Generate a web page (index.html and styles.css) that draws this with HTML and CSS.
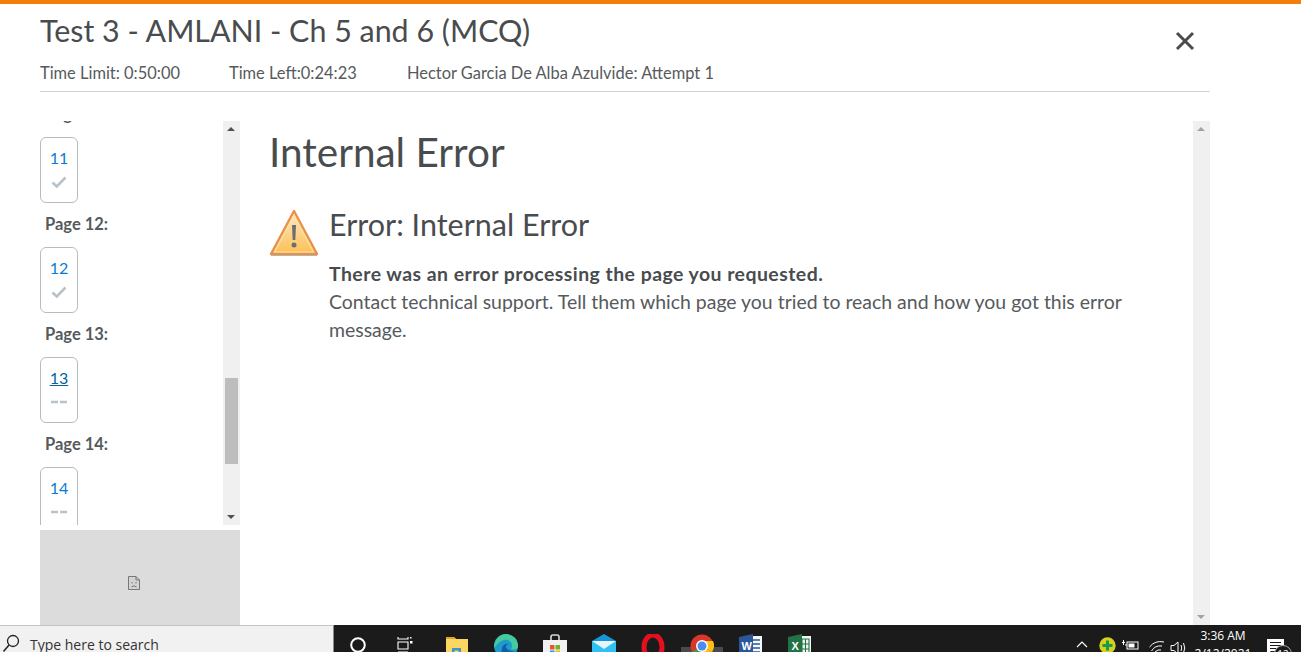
FILE: index.html
```html
<!DOCTYPE html>
<html lang="en">
<head>
    <meta charset="UTF-8">
    <meta name="viewport" content="width=device-width, initial-scale=1.0">
    <title>Test 3 - AMLANI - Ch 5 and 6 (MCQ)</title>
    <link rel="stylesheet" href="styles.css">
</head>
<body>
    <div class="page">
        <header class="quiz-header">
            <div class="title-row">
                <h1 class="quiz-title">Test 3 - AMLANI - Ch 5 and 6 (MCQ)</h1>
                <button class="close-btn" aria-label="Close">
                    <svg width="20" height="20" viewBox="0 0 20 20"><path d="M2 2 L18 18 M18 2 L2 18" stroke="#494c4e" stroke-width="3" fill="none"/></svg>
                </button>
            </div>
            <div class="meta-row">
                <span class="meta-limit">Time Limit: 0:50:00</span>
                <span class="meta-left">Time Left:0:24:23</span>
                <span>Hector Garcia De Alba Azulvide: Attempt 1</span>
            </div>
        </header>

        <main class="quiz-body">
            <aside class="sidebar">
                <div class="nav-wrap">
                    <div class="nav-list">
                        <div class="nav-page">
                            <div class="page-label">Page 11:</div>
                            <a class="page-card"><span class="page-num">11</span><svg class="state" width="16" height="12" viewBox="0 0 16 12"><path d="M1.5 6.5 L5.8 10.5 L14.5 1.5" stroke="#b9c2c8" stroke-width="2.6" fill="none"/></svg></a>
                        </div>
                        <div class="nav-page">
                            <div class="page-label">Page 12:</div>
                            <a class="page-card"><span class="page-num">12</span><svg class="state" width="16" height="12" viewBox="0 0 16 12"><path d="M1.5 6.5 L5.8 10.5 L14.5 1.5" stroke="#b9c2c8" stroke-width="2.6" fill="none"/></svg></a>
                        </div>
                        <div class="nav-page">
                            <div class="page-label">Page 13:</div>
                            <a class="page-card"><span class="page-num current">13</span><svg class="state" width="16" height="12" viewBox="0 0 16 12"><path d="M0 6 H7 M9 6 H16" stroke="#b9c2c8" stroke-width="2.4" fill="none"/></svg></a>
                        </div>
                        <div class="nav-page">
                            <div class="page-label">Page 14:</div>
                            <a class="page-card"><span class="page-num">14</span><svg class="state" width="16" height="12" viewBox="0 0 16 12"><path d="M0 6 H7 M9 6 H16" stroke="#b9c2c8" stroke-width="2.4" fill="none"/></svg></a>
                        </div>
                    </div>
                    <div class="scrollbar nav-scroll">
                        <span class="arrow-up dark"></span>
                        <span class="thumb"></span>
                        <span class="arrow-down dark"></span>
                    </div>
                </div>
                <div class="sidebar-foot">
                    <svg width="14" height="16" viewBox="0 0 14 16"><path d="M1.5 1.5 H9 L12.5 5 V14.5 H1.5 Z M9 1.5 V5 H12.5" fill="#d4d4d4" stroke="#777" stroke-width="1"/><path d="M4.5 12 Q7 9.5 9.5 12" stroke="#777" fill="none"/><path d="M5 7 V8.5 M9 7 V8.5" stroke="#777"/></svg>
                </div>
            </aside>

            <section class="content">
                <h2 class="error-title">Internal Error</h2>
                <div class="error-box">
                    <svg class="warn-icon" width="50" height="48" viewBox="0 0 50 48">
                        <defs>
                            <linearGradient id="warnFill" x1="0" y1="0" x2="0" y2="1">
                                <stop offset="0" stop-color="#ffe9c4"/>
                                <stop offset="1" stop-color="#fcc054"/>
                            </linearGradient>
                        </defs>
                        <path d="M25 2 L48 45 H2 Z" fill="url(#warnFill)" stroke="#e9904a" stroke-width="2.4" stroke-linejoin="round"/>
                        <path d="M25 6 L44.5 43 H5.5 Z" fill="none" stroke="#ffe2a6" stroke-width="1.2"/>
                        <path d="M2 46.5 H48" stroke="#7d9aa8" stroke-width="1" opacity=".6"/>
                        <path d="M23 16 H27 L26.3 31 H23.7 Z" fill="#6b6f72"/>
                        <circle cx="25" cy="36" r="2.5" fill="#6b6f72"/>
                    </svg>
                    <div class="error-text">
                        <h3 class="error-heading">Error: Internal Error</h3>
                        <p class="error-msg"><strong>There was an error processing the page you requested.</strong><br>Contact technical support. Tell them which page you tried to reach and how you got this error message.</p>
                    </div>
                </div>
            </section>

            <div class="scrollbar content-scroll">
                <span class="arrow-up"></span>
                <span class="arrow-down"></span>
            </div>
        </main>
    </div>

    <footer class="taskbar">
        <div class="search-box">
            <svg width="20" height="20" viewBox="0 0 20 20"><circle cx="12" cy="8" r="5.5" stroke="#222" stroke-width="1.3" fill="none"/><path d="M8 12 L2.5 18.5" stroke="#222" stroke-width="1.5"/></svg>
            <span>Type here to search</span>
        </div>
        <div class="task-icons">
            <span class="ti ti-cortana"><svg width="16" height="16" viewBox="0 0 16 16"><circle cx="8" cy="8" r="6.8" stroke="#fff" stroke-width="2" fill="none"/></svg></span>
            <span class="ti ti-view"><svg width="16" height="16" viewBox="0 0 16 16"><path d="M1 0 V2 H11 V0 M1 15 H11 M1 5 H11 V12 H1 Z" stroke="#fff" stroke-width="1.1" fill="none"/><rect x="13" y="4" width="2.5" height="2.5" fill="#fff"/><rect x="13" y="0" width="1.5" height="1.5" fill="#fff"/></svg></span>
            <span class="ti ti-files"><svg width="22" height="22" viewBox="0 0 22 22"><path d="M0 1 H8 L10 3 H22 V22 H0 Z" fill="#fbd661"/><path d="M0 1 H8 L10 3 H0 Z" fill="#e0a52e"/><rect x="6" y="12" width="9" height="10" fill="#3a96d0"/><rect x="8.5" y="14.5" width="4" height="4" fill="#fbd661"/></svg></span>
            <span class="ti"><svg width="24" height="24" viewBox="0 0 24 24"><circle cx="12" cy="12" r="12" fill="#1d9bc9"/><path d="M12 0 A12 12 0 0 1 24 12 C24 16 19 16 17 15 C20 10 16 5 10 6 C6 7 3 10 0 14 C0 5 6 0 12 0 Z" fill="#45c9a0"/><path d="M8 15 C8 11 12 9 15 10 C12 10 11 13 13 15 C15 17 19 17 21 18 C18 22 14 24 10 23 C7 21 7 18 8 15 Z" fill="#0e5fa8"/></svg></span>
            <span class="ti"><svg width="24" height="24" viewBox="0 0 24 24"><path d="M8 6 V3 Q8 1 10 1 H14 Q16 1 16 3 V6" stroke="#d9d9d9" stroke-width="1.6" fill="none"/><rect x="0" y="6" width="24" height="18" fill="#f1f1f1"/><rect x="7" y="11" width="4.5" height="4.5" fill="#e8562a"/><rect x="12.5" y="11" width="4.5" height="4.5" fill="#6fb52c"/><rect x="7" y="16.5" width="4.5" height="4.5" fill="#1ba1e2"/><rect x="12.5" y="16.5" width="4.5" height="4.5" fill="#fbb900"/></svg></span>
            <span class="ti"><svg width="24" height="24" viewBox="0 0 24 24"><path d="M0 7 L12 0 L24 7 V24 H0 Z" fill="#1596d8"/><path d="M0 7 L12 14 L24 7 V24 H0 Z" fill="#2fc1f3"/><path d="M0 7 H24 L12 15 Z" fill="#e6f4fb"/></svg></span>
            <span class="ti"><svg width="24" height="24" viewBox="0 0 24 24"><ellipse cx="12" cy="13" rx="9" ry="12" fill="none" stroke="#e3101f" stroke-width="5"/></svg></span>
            <span class="ti ti-active"><svg width="24" height="24" viewBox="0 0 24 24"><circle cx="12" cy="12" r="11.5" fill="#d9372c"/><path d="M12 12 L2 18 A11.5 11.5 0 0 0 12 23.5 Z" fill="#2fa350"/><path d="M12 12 L22 18 A11.5 11.5 0 0 1 12 23.5 Z" fill="#fbc116"/><path d="M12 7 H23 A11.5 11.5 0 0 1 22 18 L12 12 Z" fill="#fbc116"/><circle cx="12" cy="12" r="6" fill="#fff"/><circle cx="12" cy="12" r="4.5" fill="#4b8cf0"/></svg></span>
            <span class="ti"><svg width="24" height="24" viewBox="0 0 24 24"><path d="M10 2 H23 V24 H10 Z" fill="#f4f7fb"/><path d="M14 6 H21 M14 10 H21 M14 14 H21 M14 18 H21" stroke="#2b579a" stroke-width="1.3"/><path d="M0 3 L14 0 V24 L0 22 Z" fill="#2b579a"/><text class="tile-letter" x="2.5" y="16">W</text></svg></span>
            <span class="ti"><svg width="24" height="24" viewBox="0 0 24 24"><path d="M10 2 H23 V24 H10 Z" fill="#f1f6f2"/><path d="M14 5 H21 V22 H14 Z M14 10 H21 M14 15 H21 M17.5 5 V22" stroke="#217346" stroke-width="1.1" fill="none"/><path d="M0 3 L14 0 V24 L0 22 Z" fill="#217346"/><text class="tile-letter" x="3.5" y="16">X</text></svg></span>
        </div>
        <div class="tray">
            <svg class="tray-caret" width="12" height="8" viewBox="0 0 12 8"><path d="M1 7 L6 2 L11 7" stroke="#fff" stroke-width="1.2" fill="none"/></svg>
            <svg class="tray-green" width="17" height="17" viewBox="0 0 17 17"><circle cx="8.5" cy="8.5" r="8.2" fill="#d9cf1e"/><path d="M7 3.5 H10 V7 H13.5 V10 H10 V13.5 H7 V10 H3.5 V7 H7 Z" fill="#149c49"/></svg>
            <svg class="tray-battery" width="17" height="12" viewBox="0 0 17 12"><rect x="5" y="3" width="11" height="7" stroke="#fff" fill="none"/><rect x="6.5" y="4.5" width="6" height="4" fill="#fff"/><path d="M0 3.5 H3 M1.5 1 V6 M3 6 H5" stroke="#fff"/></svg>
            <svg class="tray-wifi" width="18" height="18" viewBox="0 0 18 18"><path d="M9 16 L6 13 Q9 10 12 11 M2.5 12 Q6 6 13 7 M0.5 8 Q6 1 15 3" stroke="#fff" fill="none"/><circle cx="13" cy="15" r="1.6" fill="#fff"/></svg>
            <svg class="tray-volume" width="18" height="16" viewBox="0 0 18 16"><path d="M1 5.5 H4 L8 2 V14 L4 10.5 H1 Z" stroke="#fff" fill="none"/><path d="M11 5 Q12.5 8 11 11 M13.5 3 Q16 8 13.5 13" stroke="#fff" fill="none"/></svg>
            <div class="clock"><div>3:36 AM</div><div>2/12/2021</div></div>
            <div class="notify">
                <svg width="17" height="15" viewBox="0 0 17 15"><path d="M0 0 H17 V12 H4 L0 15 Z" fill="#fff"/><path d="M3 3.5 H14 M3 6.5 H14 M3 9.5 H10" stroke="#1b1b1b"/></svg>
                <span class="notify-badge">12</span>
            </div>
        </div>
    </footer>
</body>
</html>
```

FILE: styles.css
```css
* {
    box-sizing: border-box;
}

html, body {
    height: 100%;
}

body {
    margin: 0;
    height: 652px;
    overflow: hidden;
    display: flex;
    flex-direction: column;
    background-color: #fff;
    border-top: 4px solid #f47e0c;
    color: #494c4e;
    font-family: Lato, "Open Sans", sans-serif;
}

.page {
    height: 621px;
    flex: none;
    padding-left: 40px;
    width: 1210px;
}

/* header */
.quiz-header {
    height: 88px;
    border-bottom: 1px solid #cdd5dc;
}

.title-row {
    display: flex;
    justify-content: space-between;
    height: 55px;
}

.quiz-title {
    margin: 8px 0 0;
    font-size: 30.4px;
    font-weight: 400;
    line-height: 36px;
}

.close-btn {
    margin: 27px 15px 0 0;
    padding: 0;
    width: 20px;
    height: 20px;
    border: none;
    background: none;
    cursor: pointer;
}

.meta-row {
    display: flex;
    font-size: 16.45px;
    line-height: 28px;
    color: #565a5c;
}

.meta-limit {
    width: 189px;
}

.meta-left {
    width: 178px;
}

/* main row */
.quiz-body {
    display: flex;
    margin-top: 29px;
    height: 504px;
}

.sidebar {
    width: 200px;
    flex: none;
    display: flex;
    flex-direction: column;
    gap: 5px;
}

.nav-wrap {
    display: flex;
    justify-content: space-between;
    height: 404px;
    overflow: hidden;
}

.nav-list {
    margin-top: -28px;
}

.nav-page {
    height: 110px;
    padding-top: 11px;
}

.page-label {
    padding-left: 5px;
    font-size: 16.5px;
    font-weight: 700;
    line-height: 20px;
    color: #565a5c;
}

.page-card {
    display: flex;
    flex-direction: column;
    align-items: center;
    width: 38px;
    height: 66px;
    margin-top: 13px;
    padding-top: 10px;
    background-color: #fff;
    border: 1px solid #b5bdc2;
    border-radius: 6px;
}

.page-num {
    font-size: 16px;
    line-height: 19px;
    color: #0a7ad1;
}

.page-num.current {
    color: #04629f;
    text-decoration: underline;
}

.state {
    margin-top: 9px;
}

.scrollbar {
    width: 17px;
    flex: none;
    position: relative;
    background-color: #f0f0f0;
}

.arrow-up, .arrow-down {
    position: absolute;
    left: 4px;
    width: 0;
    height: 0;
    border-left: 4px solid transparent;
    border-right: 4px solid transparent;
}

.arrow-up {
    top: 6px;
    border-bottom: 4px solid #a3a3a3;
}

.arrow-down {
    bottom: 6px;
    border-top: 4px solid #a3a3a3;
}

.arrow-up.dark {
    border-bottom-color: #505050;
}

.arrow-down.dark {
    border-top-color: #505050;
}

.thumb {
    position: absolute;
    top: 257px;
    left: 2px;
    width: 13px;
    height: 86px;
    background-color: #bdbdbd;
}

.sidebar-foot {
    height: 95px;
    display: flex;
    align-items: center;
    justify-content: center;
    padding: 10px 12px 0 0;
    background-color: #dcdcdc;
}

/* error content */
.content {
    flex: 1;
    padding: 0 40px 0 29px;
}

.error-title {
    margin: 8px 0 0;
    font-size: 40.5px;
    font-weight: 400;
    line-height: 46px;
}

.error-box {
    display: flex;
    gap: 10px;
    margin-top: 31px;
}

.warn-icon {
    flex: none;
    margin-top: 3px;
}

.error-heading {
    margin: 0;
    font-size: 30.5px;
    font-weight: 400;
    line-height: 36px;
}

.error-msg {
    margin: 18px 0 0;
    font-size: 19.45px;
    line-height: 28px;
    color: #565a5c;
}

.error-msg strong {
    color: #494c4e;
    letter-spacing: .46px;
}

/* windows taskbar */
.taskbar {
    height: 27px;
    flex: none;
    display: flex;
    overflow: hidden;
    background-color: #1b1b1b;
    font-family: "Open Sans", "Noto Sans", sans-serif;
}

.search-box {
    width: 334px;
    flex: none;
    display: flex;
    gap: 9px;
    padding: 9px 0 0 1px;
    background-color: #f1f1f1;
    border-top: 1px solid #c4c4c4;
    border-right: 1px solid #8a8a8a;
    font-size: 14px;
    line-height: 20px;
    color: #333;
}

.search-box svg {
    margin-top: -2px;
}

.task-icons {
    display: flex;
    gap: 25px;
    padding-top: 9px;
    height: 60px;
}

.ti {
    width: 24px;
    flex: none;
    display: flex;
    justify-content: center;
    align-items: flex-start;
}

.ti-cortana {
    margin: 3px 0 0 12px;
}

.ti-view {
    margin: 3px 3px 0 -2px;
}

.ti-files {
    margin-top: 2px;
}

.ti-active {
    position: relative;
    z-index: 0;
}

/* grey highlight under the running app */
.ti-active::before {
    content: "";
    position: absolute;
    z-index: -1;
    left: -9px;
    top: 13px;
    width: 42px;
    height: 14px;
    background-color: #4a4a4a;
}

.tile-letter {
    font-family: "Liberation Sans", sans-serif;
    font-size: 11px;
    font-weight: 700;
    fill: #fff;
}

.tray {
    flex: 1;
    display: flex;
    align-items: flex-start;
    position: relative;
    padding-top: 15px;
    color: #fff;
}

.tray svg {
    flex: none;
}

.tray-caret {
    margin-left: 264px;
}

.tray-green {
    margin: -3px 0 0 11px;
}

.tray-battery {
    margin: -1px 0 0 6px;
}

.tray-wifi {
    margin: -1px 0 0 10px;
}

.tray-volume {
    margin: 0 0 0 3px;
}

.clock {
    width: 60px;
    margin: -13px 0 0 5px;
    font-size: 12px;
    line-height: 18px;
    text-align: center;
    white-space: nowrap;
}

.notify {
    margin: -3px 0 0 14px;
    position: relative;
}

.notify-badge {
    position: absolute;
    left: 7px;
    top: 8px;
    width: 18px;
    height: 18px;
    border-radius: 50%;
    background-color: #1b1b1b;
    border: 1px solid #aaa;
    font-size: 10px;
    line-height: 16px;
    text-align: center;
}
```
